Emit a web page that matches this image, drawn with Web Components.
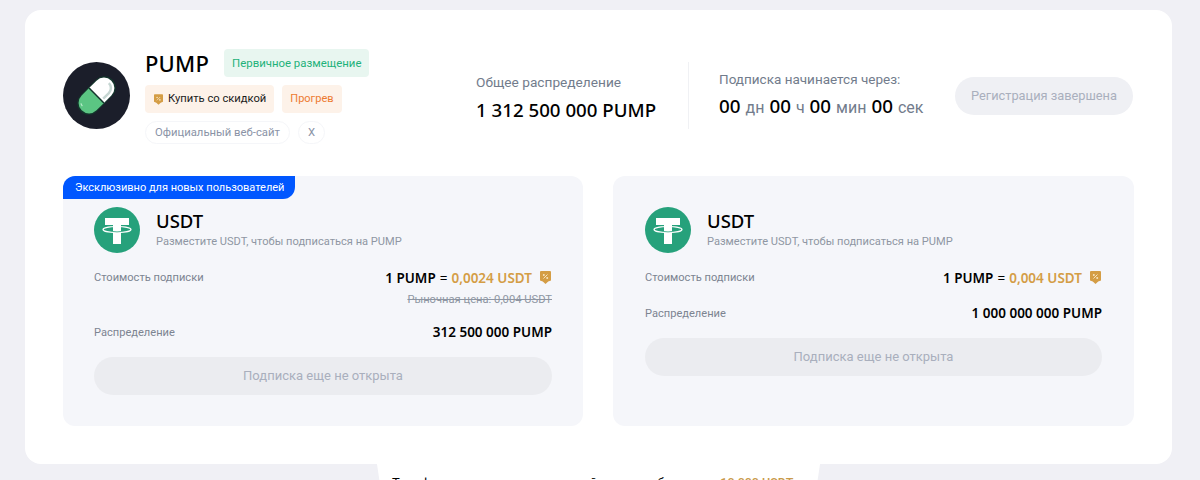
<!DOCTYPE html>
<html lang="ru">
<head>
<meta charset="utf-8">
<title>PUMP</title>
<style>
  html, body { margin: 0; height: 480px; overflow: hidden; background: #f0f0f5; }
  body { font-family: Roboto, "Noto Sans", sans-serif; color: #000; }
</style>
</head>
<body>
<launch-page>
  <launch-header></launch-header>
  <div slot="panels">
    <sub-panel banner="Эксклюзивно для новых пользователей" price="0,0024 USDT" market="Рыночная цена: 0,004 USDT" total="312 500 000 PUMP"></sub-panel>
    <sub-panel price="0,004 USDT" total="1 000 000 000 PUMP"></sub-panel>
  </div>
</launch-page>

<script>
const discountIcon = (w, h) => `
  <svg width="${w}" height="${h}" viewBox="0 0 11 13" style="flex:none">
    <path d="M0 1.200C0 .5.5 0 1.200 0h8.600c.7 0 1.200.5 1.200 1.200v8.200L8.200 10.600 5.500 13 2.800 10.600 0 9.400z" fill="#d49d45"/>
    <path d="M3.500 7.500l4-4" stroke="#f6e3c0" stroke-width="1"/>
    <circle cx="3.800" cy="4" r="1" fill="#f6e3c0"/>
    <circle cx="7.200" cy="7" r="1" fill="#f6e3c0"/>
  </svg>`

customElements.define('launch-page',
  class extends HTMLElement {
    constructor () {
      super()
      this.attachShadow({ mode: 'open' }).innerHTML = `
        <style>
          :host { display: block; padding: 10px 28px 0 25px; }
          .card { background: #fff; border-radius: 16px; height: 454px; box-sizing: border-box; padding: 38px 38px 0; }
          .tab {
            width: 443px; height: 30px; margin: 0 0 0 352px; background: #fff;
            clip-path: polygon(0 0, 100% 0, 99% 100%, 1% 100%);
            box-sizing: border-box; padding-top: 10px; padding-left: 15px;
            font-size: 13px; line-height: 18px; white-space: nowrap;
          }
          .tab b { font-size: 12.500px; font-weight: 500; color: #c99a4b; }
          ::slotted(div) { display: grid; grid-template-columns: 520px 521px; gap: 30px; margin-top: 33px; }
        </style>
        <div class="card">
          <slot></slot>
          <slot name="panels"></slot>
        </div>
        <div class="tab">Тарифы подписки: минимальный взнос на баланс от <b>10 000 USDT</b></div>
      `
    }
  }
)

customElements.define('launch-header',
  class extends HTMLElement {
    constructor () {
      super()
      this.attachShadow({ mode: 'open' }).innerHTML = `
        <style>
          :host { display: flex; align-items: flex-start; height: 95px; }
          .logo { width: 67px; height: 67px; margin: 14px 15px 0 0; flex: none; display: block; }
          .info { width: 331px; flex: none; display: flex; flex-direction: column; margin-top: 1px; }
          .row { display: flex; align-items: center; gap: 8px; }
          .row + .row { margin-top: 8px; }
          .name { font-family: "Noto Sans", sans-serif; font-size: 22px; line-height: 28px; font-weight: 500; margin-right: 7px; letter-spacing: .2px; }
          .tag { font-size: 11.400px; line-height: 28px; height: 28px; padding: 0 8px; border-radius: 4px; }
          .green { background: #e8f6f0; color: #1eb27a; }
          .buy { background: #fdf2e9; color: #1b1b1b; display: flex; align-items: center; gap: 5px; font-size: 11.200px; }
          .buy svg { margin-left: 1px; }
          .warm { background: #fdf2e9; color: #ed7b31; font-size: 11px; }
          .link { font-size: 11.300px; line-height: 21px; height: 23px; padding: 0 9px; color: #8a93a6; border: 1px solid #f5f6f9; border-radius: 12px; box-sizing: border-box; }
          .total { width: 212px; flex: none; margin-top: 24px; }
          .label { font-size: 13.700px; line-height: 20px; color: #727c8c; }
          .timer .label { font-size: 13.500px; }
          .value { font-family: "Noto Sans", sans-serif; font-size: 18.700px; line-height: 26px; font-weight: 500; margin-top: 5px; }
          .sep { width: 1px; height: 67px; background: #f0f1f4; margin: 14px 30px 0 0; flex: none; }
          .timer { width: 236px; flex: none; margin-top: 21px; }
          .clock { display: flex; align-items: baseline; gap: 5px; margin-top: 4px; font-family: "Noto Sans", sans-serif; font-size: 18.800px; line-height: 26px; font-weight: 500; }
          .clock span { font-family: Roboto, sans-serif; font-size: 16px; font-weight: 400; color: #727c8c; }
          .btn { margin-top: 29px; width: 178px; height: 38px; line-height: 38px; border-radius: 19px; background: #eff0f4; color: #a9afbd; font-size: 12.800px; text-align: center; }
        </style>
        <svg class="logo" viewBox="0 0 67 67">
          <circle cx="33.500" cy="33.500" r="33.500" fill="#1b1e2a"/>
          <g transform="rotate(-45 33.500 33.500)">
            <rect x="11" y="22" width="45" height="23" rx="11.500" fill="#14352c"/>
            <path d="M33.500 23H23a10.500 10.500 0 0 0 0 21h10.500z" fill="#5bc583"/>
            <path d="M33.500 23H44a10.500 10.500 0 0 1 0 21H33.500z" fill="#fff"/>
            <path d="M36 40.500h8a7 7 0 0 0 7-7" fill="none" stroke="#c6d6d2" stroke-width="2.500"/>
            <path d="M17 28a7 7 0 0 0-1 3" fill="none" stroke="#b8ecca" stroke-width="1.200"/>
            <path d="M33.500 23v21" stroke="#14352c" stroke-width="1.500"/>
          </g>
        </svg>
        <div class="info">
          <div class="row">
            <div class="name">PUMP</div>
            <div class="tag green">Первичное размещение</div>
          </div>
          <div class="row">
            <div class="tag buy">${discountIcon(9, 11)}Купить со скидкой</div>
            <div class="tag warm">Прогрев</div>
          </div>
          <div class="row">
            <div class="link">Официальный веб-сайт</div>
            <div class="link">X</div>
          </div>
        </div>
        <div class="total">
          <div class="label">Общее распределение</div>
          <div class="value">1 312 500 000 PUMP</div>
        </div>
        <div class="sep"></div>
        <div class="timer">
          <div class="label">Подписка начинается через:</div>
          <div class="clock">00 <span>дн</span> 00 <span>ч</span> 00 <span>мин</span> 00 <span>сек</span></div>
        </div>
        <div class="btn">Регистрация завершена</div>
      `
    }
  }
)

customElements.define('sub-panel',
  class extends HTMLElement {
    constructor () {
      super()
      const banner = this.getAttribute('banner')
      const market = this.getAttribute('market')
      this.attachShadow({ mode: 'open' }).innerHTML = `
        <style>
          :host { display: block; position: relative; height: 250px; box-sizing: border-box; background: #f5f6fa; border-radius: 12px; padding: 31px 31px 0; }
          :host(:last-child) { padding: 31px 32px 0; }
          .banner {
            position: absolute; left: 0; top: 0; height: 23px; line-height: 23px; padding: 0 11px 0 12px;
            background: #0057ff; color: #fff; font-size: 11px; border-radius: 12px 0 12px 0;
          }
          .head { display: flex; align-items: center; gap: 16px; height: 46px; }
          .head svg { width: 46px; height: 46px; flex: none; }
          .coin { font-family: "Noto Sans", sans-serif; font-size: 18.500px; line-height: 24px; font-weight: 500; margin-top: -1px; }
          .desc { font-size: 11.100px; line-height: 16px; color: #8f96a3; margin-top: 1px; }
          .line { display: flex; justify-content: space-between; align-items: center; height: 20px; }
          .price { margin-top: 14px; }
          .k { font-size: 11.100px; color: #7c8491; }
          .v { font-family: "Noto Sans", sans-serif; font-size: 13.500px; font-weight: 600; display: flex; align-items: center; }
          .price .v { margin-top: 1px; }
          .v i { font-style: normal; font-weight: 400; margin: 0 4px; }
          .v em { font-style: normal; color: #d49d45; margin-right: 8px; }
          .v svg { margin-right: 1px; }
          .market { text-align: right; font-size: 11.200px; line-height: 16px; color: #8f96a3; text-decoration: line-through; margin-top: 5px; }
          .tot { margin-top: ${market ? 14 : 16}px; }
          .go { margin-top: 15px; height: 38px; line-height: 38px; border-radius: 19px; background: #ebecf0; color: #a9afbd; text-align: center; font-size: 13px; }
        </style>
        ${banner ? `<div class="banner">${banner}</div>` : ''}
        <div class="head">
          <svg viewBox="0 0 46 46">
            <circle cx="23" cy="23" r="23" fill="#26a17b"/>
            <path d="M11 11h24v7h-8v19h-8V18h-8z" fill="#fff"/>
            <ellipse cx="23" cy="22.500" rx="14" ry="3" fill="none" stroke="#fff" stroke-width="1.200"/>
            <path d="M19 24.500q4 .8 8 0" fill="none" stroke="#26a17b" stroke-width=".8"/>
          </svg>
          <div>
            <div class="coin">USDT</div>
            <div class="desc">Разместите USDT, чтобы подписаться на PUMP</div>
          </div>
        </div>
        <div class="line price">
          <div class="k">Стоимость подписки</div>
          <div class="v">1 PUMP<i>=</i><em>${this.getAttribute('price')}</em>${discountIcon(11, 13)}</div>
        </div>
        ${market ? `<div class="market">${market}</div>` : ''}
        <div class="line tot">
          <div class="k">Распределение</div>
          <div class="v">${this.getAttribute('total')}</div>
        </div>
        <div class="go">Подписка еще не открыта</div>
      `
    }
  }
)
</script>
</body>
</html>
